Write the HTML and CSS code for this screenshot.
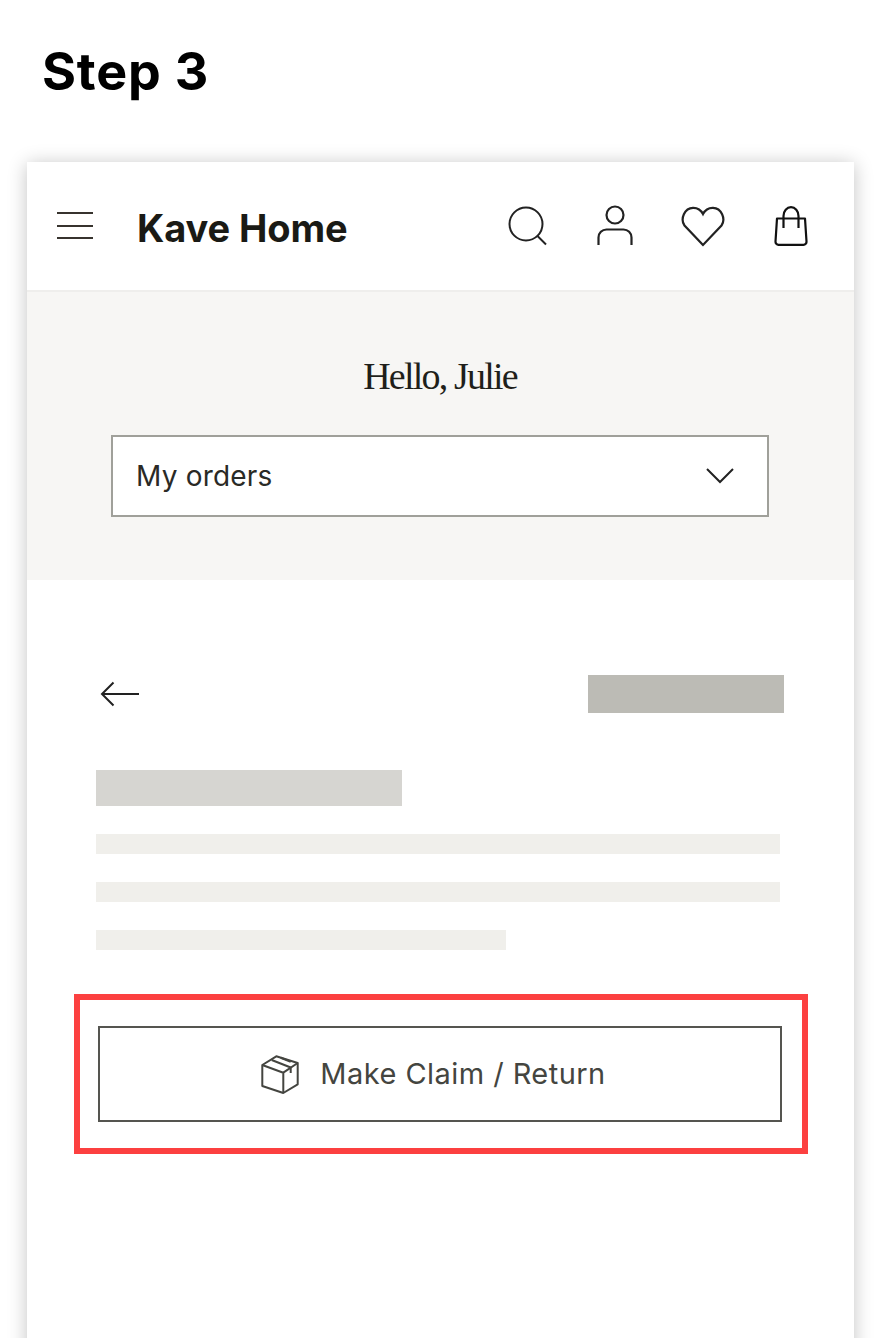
FILE: index.html
```html
<!DOCTYPE html>
<html lang="en">
<head>
<meta charset="utf-8">
<title>Step 3</title>
<link rel="stylesheet" href="styles.css">
</head>
<body>
<main class="page">
  <h1 class="step-title">Step 3</h1>
  <section class="phone">
    <header class="topbar">
      <svg class="burger" width="36" height="30" viewBox="0 0 36 30" fill="none" stroke="#37332e" stroke-width="2"><path d="M0 2h36M0 15h36M0 27h36"/></svg>
      <span class="logo">Kave Home</span>
      <nav class="icons">
        <svg width="44" height="44" viewBox="0 0 44 44" fill="none" stroke="#222" stroke-width="2"><circle cx="21" cy="20" r="16.5"/><path d="M32.5 32l8.500 8.500"/></svg>
        <svg width="44" height="44" viewBox="0 0 44 44" fill="none" stroke="#222" stroke-width="2.200"><circle cx="22" cy="11" r="8.500"/><path d="M5.500 41v-7.500a8 8 0 0 1 8-8h17a8 8 0 0 1 8 8V41"/></svg>
        <svg width="44" height="44" viewBox="0 0 44 44" fill="none" stroke="#222" stroke-width="2.200"><path d="M22 41L3.500 21.500C-1 15 3.500 4 12 3.800c4.500-.1 8 2.200 10 6.200 2-4 5.500-6.300 10-6.200C40.500 4 45 15 40.500 21.500z"/></svg>
        <svg width="44" height="44" viewBox="0 0 44 44" fill="none" stroke="#111" stroke-width="2.200" stroke-linejoin="round"><path d="M8 14.500h28l1.500 23a3 3 0 0 1-3 3.300h-25a3 3 0 0 1-3-3.300z"/><path d="M14.500 24V12a7.500 8.800 0 0 1 15 0v12"/></svg>
      </nav>
    </header>
    <section class="account">
      <h2 class="greeting">Hello, Julie</h2>
      <div class="select">
        <span>My orders</span>
        <svg width="28" height="16" viewBox="0 0 28 16" fill="none" stroke="#222" stroke-width="2"><path d="M1 1l13 13L27 1"/></svg>
      </div>
    </section>
    <section class="order">
      <div class="order-top">
        <svg width="40" height="26" viewBox="0 0 40 26" fill="none" stroke="#222" stroke-width="2"><path d="M39 13H2M13.500 1.500L2 13l11.500 11.500"/></svg>
        <div class="sk sk-status"></div>
      </div>
      <div class="sk sk-title"></div>
      <div class="sk sk-line"></div>
      <div class="sk sk-line"></div>
      <div class="sk sk-line sk-short"></div>
      <div class="highlight">
        <button class="claim" type="button">
          <svg class="claim-icon" width="40" height="40" viewBox="0 0 40 40" fill="none" stroke="#444540" stroke-width="2" stroke-linejoin="round"><path d="M1.300 10L15.300 1.300 36.700 8v21.300L22.300 38 1.300 31z"/><path d="M1.300 10l21 7.700V38M22.300 17.700L36.700 8"/><path d="M10.700 5l19 7.500v5.500M19.700 2.700l10 4"/></svg>
          <span class="claim-label">Make Claim / Return</span>
        </button>
      </div>
    </section>
  </section>
</main>
</body>
</html>
```
FILE: styles.css
```css
* { box-sizing: border-box; }
html, body { margin: 0; height: 1338px; overflow: hidden; background: #fff; }
.page { padding: 40px 26px 0 27px; }
.step-title {
  margin: 0 0 56px 15px;
  height: 66px;
  font: 700 52px/64px "Inter", "Liberation Sans", sans-serif;
  letter-spacing: .8px;
  color: #000;
}
.phone {
  height: 1300px;
  background: #fff;
  box-shadow: 0 2px 18px rgba(0, 0, 0, .24);
}
.topbar {
  display: flex;
  align-items: center;
  height: 130px;
  padding: 0 41px 0 30px;
  border-bottom: 2px solid #efeeec;
}
.burger { flex: none; }
.logo {
  margin: 3px 0 0 44px;
  font: 700 38px/1 "Inter", "Liberation Sans", sans-serif;
  color: #1a1a15;
  letter-spacing: -.1px;
}
.icons { display: flex; gap: 44px; margin-left: auto; }
.account {
  height: 288px;
  background: #f7f6f4;
  padding: 62px 85px 0 84px;
}
.greeting {
  margin: 0 0 37px;
  height: 44px;
  text-align: center;
  font: 400 38px/44px "Liberation Serif", serif;
  letter-spacing: -1.8px;
  color: #1f1f1a;
}
.select {
  display: flex;
  align-items: center;
  justify-content: space-between;
  height: 82px;
  padding: 0 33px 0 23px;
  background: #fff;
  border: 2px solid #a0a09a;
  font: 400 28px/1 "Inter", sans-serif;
  letter-spacing: .2px;
  color: #2a2a26;
}
.order { padding: 95px 70px 0 69px; }
.order-top {
  display: flex;
  align-items: center;
  justify-content: space-between;
  height: 38px;
  padding-left: 4px;
}
.sk-status { width: 196px; height: 38px; background: #bcbbb5; }
.sk-title { width: 306px; height: 36px; margin-top: 57px; background: #d6d5d1; }
.sk-line { width: 684px; height: 20px; margin-top: 28px; background: #f0efeb; }
.sk-short { width: 410px; }
.highlight {
  width: 734px;
  height: 160px;
  margin: 44px 0 0 -22px;
  padding: 26px 20px 0 18px;
  border: 6px solid #fc4040;
}
.claim {
  display: flex;
  align-items: center;
  justify-content: center;
  gap: 19px;
  width: 100%;
  height: 96px;
  padding: 0 13px 0 0;
  background: #fff;
  border: 2px solid #555550;
  font: 400 29px/1 "Inter", sans-serif;
  letter-spacing: .45px;
  color: #444540;
}
.claim-icon { margin-top: 2px; }
.claim-label { margin-bottom: 2px; }
```
